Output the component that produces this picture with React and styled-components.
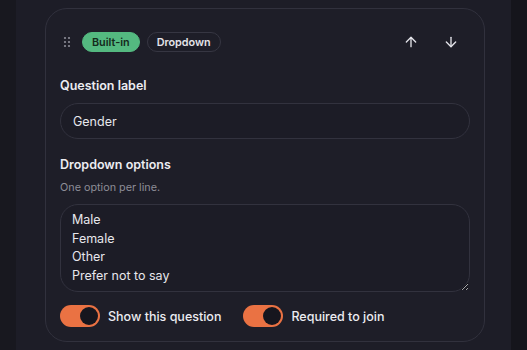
import React from 'react';
import styled, { createGlobalStyle } from 'styled-components';
import { ArrowUp, ArrowDown } from 'lucide-react';

const GlobalStyle = createGlobalStyle`
  html, body {
    margin: 0;
    padding: 0;
    background: #15151c;
    font-family: Inter, "Noto Sans", sans-serif;
    color: #e7e7ec;
  }
`;

const Shell = styled.div`
  display: flex;
  width: 527px;
  height: 350px;
  overflow: hidden;
  background: #15151c;
`;

const Rail = styled.div`
  width: 16px;
  flex-shrink: 0;
  background: ${p => p.$right ? '#15151c' : '#18181f'};
`;

const Panel = styled.div`
  flex: 1;
  background: #1d1d27;
  padding: 8px 26px 0 29px;
`;

const Card = styled.section`
  border: 1px solid #31313d;
  border-radius: 22px;
  background: #1e1e28;
  padding: 17px 14px 14px 14px;
  display: flex;
  flex-direction: column;
`;

const Header = styled.div`
  display: flex;
  align-items: center;
  height: 32px;
  padding-right: 3px;
`;

const Handle = styled.div`
  width: 14px;
  display: flex;
  justify-content: center;
  margin-right: 8px;
  color: #8c8c96;
`;

const Badge = styled.span`
  height: 20px;
  box-sizing: border-box;
  display: inline-flex;
  align-items: center;
  padding: 0 9px;
  border-radius: 10px;
  font-size: 10.8px;
  font-weight: 600;
  margin-right: 7px;
  background: ${p => p.$accent ? '#54b980' : 'transparent'};
  color: ${p => p.$accent ? '#142a1c' : '#e4e4ea'};
  border: 1px solid ${p => p.$accent ? '#54b980' : '#363642'};
`;

const Spacer = styled.div`
  flex: 1;
`;

const IconButton = styled.button`
  width: 32px;
  height: 32px;
  border: none;
  background: transparent;
  color: #e4e4ea;
  display: flex;
  align-items: center;
  justify-content: center;
  padding: 0;
  margin-left: 8px;
  cursor: pointer;
`;

const Label = styled.div`
  font-size: 12.5px;
  font-weight: 600;
  line-height: 18px;
  color: #ececf1;
  margin-top: ${p => p.$top}px;
`;

const Hint = styled.div`
  font-size: 10.8px;
  line-height: 16px;
  color: #8d8d97;
  margin-top: 6px;
`;

const TextInput = styled.input`
  box-sizing: border-box;
  width: 100%;
  height: 36px;
  margin-top: 8px;
  border: 1px solid #32323e;
  border-radius: 18px;
  background: #1c1c26;
  color: #e7e7ec;
  font-family: inherit;
  font-size: 12.5px;
  padding: 0 12px;
  outline: none;
`;

const TextArea = styled.textarea`
  box-sizing: border-box;
  width: 100%;
  height: 88px;
  margin-top: 8px;
  border: 1px solid #32323e;
  border-radius: 18px;
  background: #1c1c26;
  color: #e7e7ec;
  font-family: inherit;
  font-size: 12.5px;
  line-height: 18.5px;
  padding: 6px 11px;
  outline: none;
  resize: vertical;
  display: block;
`;

const Toggles = styled.div`
  display: flex;
  align-items: center;
  gap: 22px;
  margin-top: 13px;
`;

const ToggleItem = styled.label`
  display: flex;
  align-items: center;
  gap: 8px;
  font-size: 12.5px;
  font-weight: 500;
  color: #ececf1;
`;

const Track = styled.span`
  width: 40px;
  height: 22px;
  border-radius: 11px;
  background: ${p => p.$on ? '#ea7243' : '#3a3a46'};
  display: flex;
  align-items: center;
  justify-content: ${p => p.$on ? 'flex-end' : 'flex-start'};
  padding: 0 2px;
  box-sizing: border-box;
`;

const Knob = styled.span`
  width: 18px;
  height: 18px;
  border-radius: 50%;
  background: #16161e;
`;

const Grip = () => (
  <svg width="8" height="12" viewBox="0 0 8 12" fill="currentColor">
    {[2, 6, 10].map(y => (
      <React.Fragment key={y}>
        <circle cx="2" cy={y} r="1.1" />
        <circle cx="6" cy={y} r="1.1" />
      </React.Fragment>
    ))}
  </svg>
);

const Toggle = ({ on, children }) => (
  <ToggleItem>
    <Track $on={on}><Knob /></Track>
    {children}
  </ToggleItem>
);

export default function App() {
  return (
    <>
      <GlobalStyle />
      <Shell>
        <Rail />
        <Panel>
          <Card>
            <Header>
              <Handle><Grip /></Handle>
              <Badge $accent>Built-in</Badge>
              <Badge>Dropdown</Badge>
              <Spacer />
              <IconButton aria-label="Move up"><ArrowUp size={16} strokeWidth={2} /></IconButton>
              <IconButton aria-label="Move down"><ArrowDown size={16} strokeWidth={2} /></IconButton>
            </Header>

            <Label $top={19}>Question label</Label>
            <TextInput defaultValue="Gender" />

            <Label $top={17}>Dropdown options</Label>
            <Hint>One option per line.</Hint>
            <TextArea defaultValue={'Male\nFemale\nOther\nPrefer not to say'} />

            <Toggles>
              <Toggle on>Show this question</Toggle>
              <Toggle on>Required to join</Toggle>
            </Toggles>
          </Card>
        </Panel>
        <Rail $right />
      </Shell>
    </>
  );
}
